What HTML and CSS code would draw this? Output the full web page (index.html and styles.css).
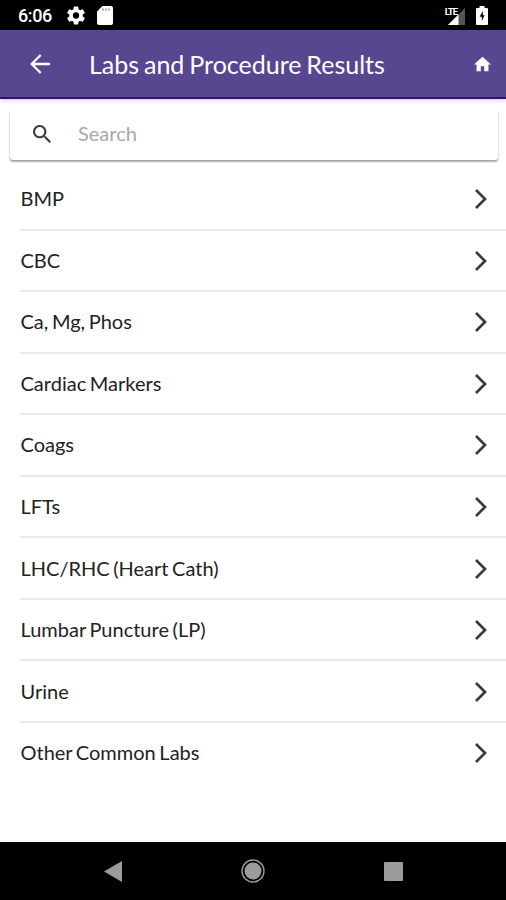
FILE: index.html
```html
<!DOCTYPE html>
<html lang="en">
<head>
<meta charset="utf-8">
<title>Labs and Procedure Results</title>
<link rel="stylesheet" href="styles.css">
</head>
<body>
<div class="statusbar">
  <span class="time">6:06</span>
  <svg class="gear" viewBox="2 2 20 20"><path fill="#fff" d="M19.43 12.98c.04-.32.07-.64.07-.98s-.03-.66-.07-.98l2.11-1.65c.19-.15.24-.42.12-.64l-2-3.46c-.12-.22-.39-.3-.61-.22l-2.49 1c-.52-.4-1.08-.73-1.69-.98l-.38-2.65A.49.49 0 0 0 14 2h-4c-.25 0-.46.18-.49.42l-.38 2.65c-.61.25-1.17.59-1.69.98l-2.49-1c-.23-.09-.49 0-.61.22l-2 3.46c-.13.22-.07.49.12.64l2.11 1.65c-.04.32-.07.65-.07.98s.03.66.07.98l-2.11 1.65c-.19.15-.24.42-.12.64l2 3.46c.12.22.39.3.61.22l2.49-1c.52.4 1.08.73 1.69.98l.38 2.65c.03.24.24.42.49.42h4c.25 0 .46-.18.49-.42l.38-2.65c.61-.25 1.17-.59 1.69-.98l2.49 1c.23.09.49 0 .61-.22l2-3.46c.12-.22.07-.49-.12-.64zM12 15.5A3.5 3.5 0 1 1 12 8.500a3.500 3.500 0 0 1 0 7z"/></svg>
  <svg class="sdcard" viewBox="0 0 16 19"><path fill="#fff" d="M5.500 0H14a2 2 0 0 1 2 2v15a2 2 0 0 1-2 2H2a2 2 0 0 1-2-2V5.500z"/><path stroke="#777" stroke-width="1.300" d="M6 2.500v2M9 2.500v2M12 2.500v2"/></svg>
  <div class="signal">
    <span class="lte">LTE</span>
    <svg class="bars" viewBox="0 0 17 17"><path fill="#555" d="M17 0v17H0z"/><path fill="#fff" d="M10.500 6.500V17H0z"/></svg>
  </div>
  <svg class="battery" viewBox="0 0 12 19"><path fill="#fff" d="M3.500 0h5v2H11a1 1 0 0 1 1 1v15a1 1 0 0 1-1 1H1a1 1 0 0 1-1-1V3a1 1 0 0 1 1-1h2.500z"/><path d="M6.800 5 3.600 10.700h2.200v4.300L8.600 9.200H6.800z"/></svg>
</div>
<header class="appbar">
  <svg class="back" viewBox="0 0 20 20" fill="none" stroke="#fff" stroke-width="2.300"><path d="M20 10H2M10.700 1 1.700 10l9 9"/></svg>
  <h1 class="title">Labs and Procedure Results</h1>
  <svg class="home" viewBox="2 3 20 17"><path fill="#fff" d="M10 20v-6h4v6h5v-8h3L12 3 2 12h3v8z"/></svg>
</header>
<main class="content">
  <div class="search">
    <svg class="glass" viewBox="3 3 17.500 17.500"><path fill="#3c3c3c" d="M15.500 14h-.79l-.28-.27A6.500 6.500 0 1 0 13.730 14.430l.27.28v.79l5 4.990L20.490 19zm-6 0a4.500 4.500 0 1 1 0-9 4.500 4.500 0 0 1 0 9z"/></svg>
    <span class="placeholder">Search</span>
  </div>
  <ul class="list">
    <li class="row"><span class="label">BMP</span><svg class="chevron" viewBox="0 0 14 22"><path d="m2 2 9 9-9 9"/></svg></li>
    <li class="row"><span class="label">CBC</span><svg class="chevron" viewBox="0 0 14 22"><path d="m2 2 9 9-9 9"/></svg></li>
    <li class="row"><span class="label">Ca, Mg, Phos</span><svg class="chevron" viewBox="0 0 14 22"><path d="m2 2 9 9-9 9"/></svg></li>
    <li class="row"><span class="label">Cardiac Markers</span><svg class="chevron" viewBox="0 0 14 22"><path d="m2 2 9 9-9 9"/></svg></li>
    <li class="row"><span class="label">Coags</span><svg class="chevron" viewBox="0 0 14 22"><path d="m2 2 9 9-9 9"/></svg></li>
    <li class="row"><span class="label">LFTs</span><svg class="chevron" viewBox="0 0 14 22"><path d="m2 2 9 9-9 9"/></svg></li>
    <li class="row"><span class="label">LHC/RHC (Heart Cath)</span><svg class="chevron" viewBox="0 0 14 22"><path d="m2 2 9 9-9 9"/></svg></li>
    <li class="row"><span class="label">Lumbar Puncture (LP)</span><svg class="chevron" viewBox="0 0 14 22"><path d="m2 2 9 9-9 9"/></svg></li>
    <li class="row"><span class="label">Urine</span><svg class="chevron" viewBox="0 0 14 22"><path d="m2 2 9 9-9 9"/></svg></li>
    <li class="row"><span class="label">Other Common Labs</span><svg class="chevron" viewBox="0 0 14 22"><path d="m2 2 9 9-9 9"/></svg></li>
  </ul>
</main>
<nav class="navbar">
  <svg class="nav-back" viewBox="0 0 18 21"><path fill="#9c9c9c" d="M18 0v21L0 10.500z"/></svg>
  <svg class="nav-home" viewBox="0 0 24 24"><circle cx="12" cy="12" r="11" fill="none" stroke="#9c9c9c" stroke-width="1.400"/><circle cx="12" cy="12" r="8.500" fill="#9c9c9c"/></svg>
  <span class="nav-recent"></span>
</nav>
</body>
</html>
```
FILE: styles.css
```css
* { box-sizing: border-box; }
body {
  margin: 0;
  width: 506px;
  height: 900px;
  display: flex;
  flex-direction: column;
  overflow: hidden;
  background: #fff;
  font-family: Lato, sans-serif;
}
svg { display: block; flex: none; }
.statusbar {
  height: 30px;
  flex: none;
  display: flex;
  align-items: center;
  padding: 0 18px;
  background: #000;
  color: #fff;
}
.time {
  width: 49px;
  font: 500 18px/30px Roboto, sans-serif;
  letter-spacing: -.4px;
  padding-top: 2px;
}
.gear { width: 18px; height: 19px; }
.sdcard { width: 16px; height: 19px; margin-left: 12px; }
.signal {
  display: flex;
  align-items: flex-start;
  margin-left: auto;
  height: 19px;
}
.lte {
  font: 700 9.5px/9px Roboto, sans-serif;
  letter-spacing: -1px;
  margin: 1px -9px 0 0;
  z-index: 1;
}
.bars { width: 17px; height: 17px; margin-top: 2px; }
.battery { width: 12px; height: 19px; margin: 1px 0 0 11px; }
.appbar {
  height: 69px;
  flex: none;
  display: flex;
  align-items: center;
  padding: 0 15px 0 30px;
  background: #584790;
  border-bottom: 2px solid #30107c;
  box-shadow: 0 1px 4px rgba(70, 30, 110, .25);
}
.back { width: 20px; height: 20px; margin-top: 1px; }
.title {
  margin: 0 auto 0 39px;
  color: #fff;
  font-size: 25px;
  font-weight: 400;
  line-height: 30px;
  word-spacing: -1.5px;
  white-space: nowrap;
}
.home { width: 17px; height: 16px; }
.content { flex: 1; min-height: 0; }
.search {
  height: 51px;
  margin: 10px 8px 0 10px;
  padding-left: 23px;
  display: flex;
  align-items: center;
  border-radius: 3px;
  background: #fff;
  box-shadow: 0 2px 2px rgba(0, 0, 0, .3), 0 1px 2px rgba(0, 0, 0, .12);
}
.glass { width: 18px; height: 18px; margin-top: -1px; }
.placeholder {
  margin-left: 27px;
  padding-bottom: 3px;
  color: #a8a8a8;
  font-size: 20px;
}
.list {
  list-style: none;
  margin: 9px 0 0;
  padding: 0 0 0 20px;
}
.row {
  height: 61.55px;
  display: flex;
  align-items: center;
  justify-content: space-between;
  padding-right: 18px;
  border-bottom: 2px solid #e9e9e9;
  color: #222;
  font-size: 20px;
}
.label {
  padding: 0 0 1px .5px;
  word-spacing: -1.5px;
}
.row:last-child { border-color: transparent; }
.chevron {
  width: 14px;
  height: 22px;
  margin-top: 1px;
  fill: none;
  stroke: #3b3b3b;
  stroke-width: 2.7;
}
.navbar {
  height: 58px;
  flex: none;
  display: flex;
  align-items: center;
  justify-content: space-between;
  padding: 0 103px 0 104px;
  background: #000;
}
.nav-back { width: 18px; height: 21px; }
.nav-home { width: 24px; height: 24px; }
.nav-recent { width: 19px; height: 19px; border-radius: 1px; background: #9c9c9c; }
```
